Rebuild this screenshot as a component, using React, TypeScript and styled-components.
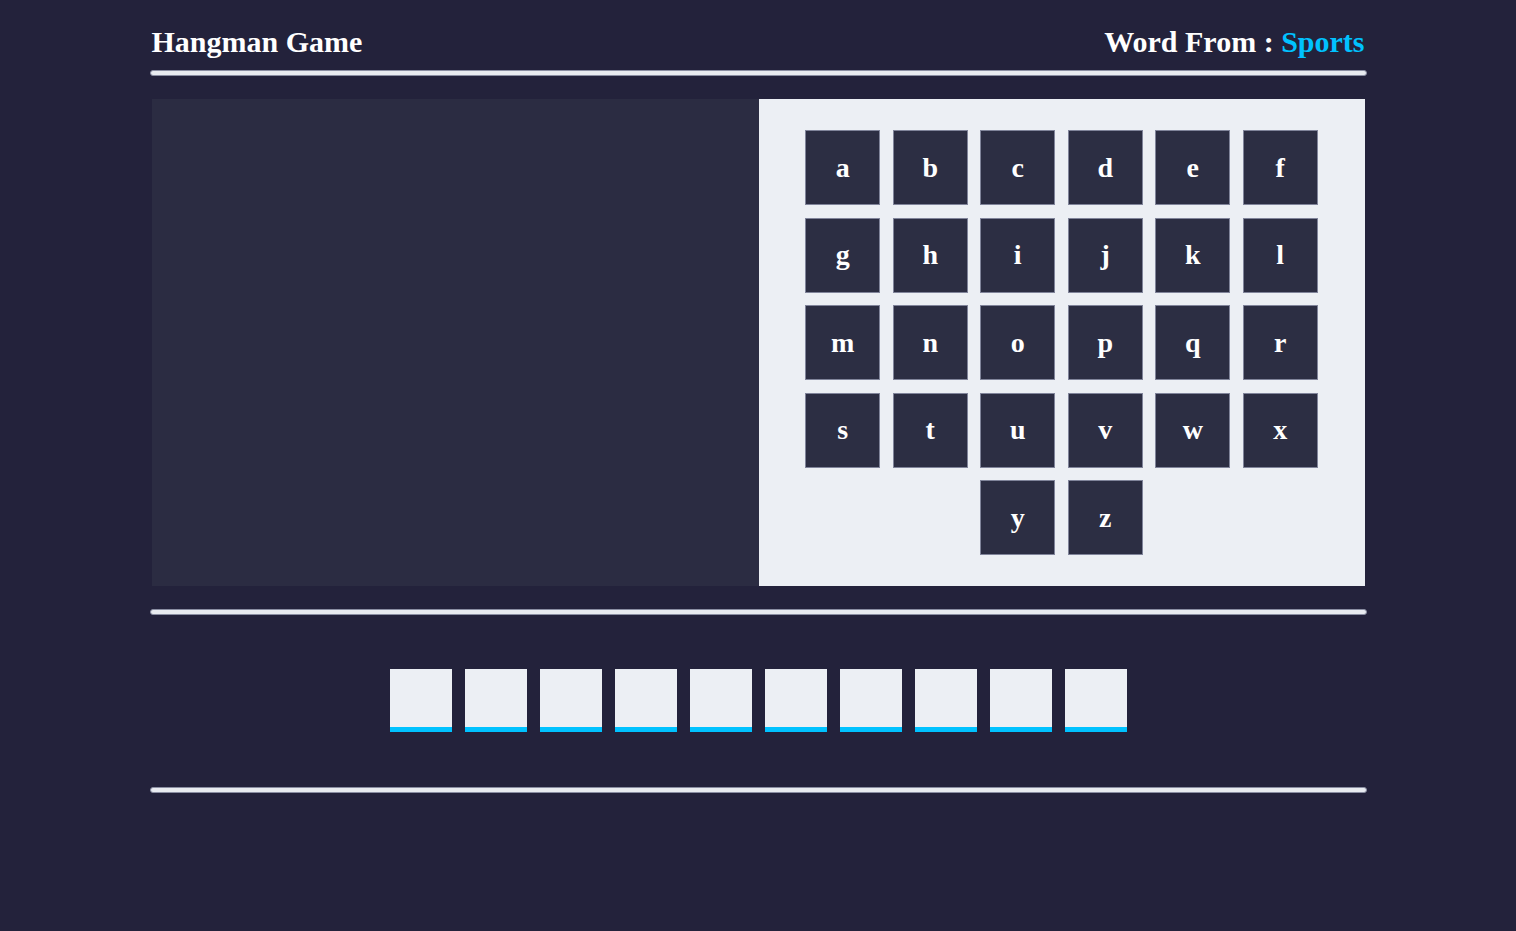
import React from "react";
import styled, { createGlobalStyle } from "styled-components";

const GlobalStyle = createGlobalStyle`
  html, body {
    margin: 0;
    padding: 0;
    background: #23223b;
    font-family: "Liberation Serif", "Times New Roman", serif;
  }
`;

const Page = styled.div`
  width: 1213px;
  margin: 0 auto;
  padding-top: 22px;
`;

const Header = styled.header`
  display: flex;
  justify-content: space-between;
  align-items: center;
  color: #ffffff;
  font-weight: bold;
  font-size: 30px;
  line-height: 40px;
`;

const Title = styled.h1`
  margin: 0;
  font-size: 30px;
  font-weight: bold;
`;

const Category = styled.div`
  font-size: 30px;
`;

const Accent = styled.span`
  color: #00c2ff;
`;

const Divider = styled.div<{ $top: number; $bottom: number }>`
  height: 4px;
  border: 1px solid #8a8ea2;
  border-radius: 3px;
  background: #e8ebf0;
  margin: ${(p) => p.$top}px -2px ${(p) => p.$bottom}px -2px;
`;

const GameArea = styled.section`
  display: flex;
`;

const Stage = styled.div`
  flex: 0 0 607px;
  background: #2b2c42;
`;

const Keyboard = styled.div`
  flex: 1;
  background: #eceff4;
  padding: 31px 0;
  display: flex;
  justify-content: center;
`;

const Keys = styled.div`
  width: 513px;
  display: flex;
  flex-wrap: wrap;
  justify-content: center;
  gap: 12.5px;
`;

const Key = styled.button`
  width: 75px;
  height: 75px;
  box-sizing: border-box;
  background: #2c2e43;
  border: 1px solid #80849a;
  color: #ffffff;
  font-family: "Liberation Serif", "Times New Roman", serif;
  font-weight: bold;
  font-size: 28px;
  display: flex;
  align-items: center;
  justify-content: center;
  padding: 0;
  cursor: pointer;
`;

const Blanks = styled.div`
  display: flex;
  justify-content: center;
  gap: 13px;
`;

const Blank = styled.span`
  width: 62px;
  height: 58px;
  background: #eceff4;
  border-bottom: 5px solid #00c2ff;
`;

const letters = "abcdefghijklmnopqrstuvwxyz".split("");

export default function App() {
  return (
    <>
      <GlobalStyle />
      <Page>
        <Header>
          <Title>Hangman Game</Title>
          <Category>
            Word From : <Accent>Sports</Accent>
          </Category>
        </Header>
        <Divider $top={8} $bottom={23} />
        <GameArea>
          <Stage />
          <Keyboard>
            <Keys>
              {letters.map((l) => (
                <Key key={l}>{l}</Key>
              ))}
            </Keys>
          </Keyboard>
        </GameArea>
        <Divider $top={23} $bottom={54} />
        <Blanks>
          {Array.from({ length: 10 }).map((_, i) => (
            <Blank key={i} />
          ))}
        </Blanks>
        <Divider $top={55} $bottom={0} />
      </Page>
    </>
  );
}
